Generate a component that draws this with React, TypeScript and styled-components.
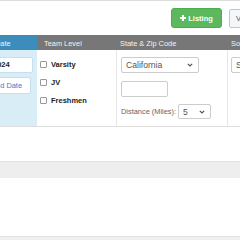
import React from 'react'
import styled, { createGlobalStyle } from 'styled-components'

const GlobalStyle = createGlobalStyle`
  body {
    margin: 0;
    background: #fff;
    font-family: 'Liberation Sans', Arial, sans-serif;
  }
`

export default function App() {
  return (
    <>
      <GlobalStyle />
      <Viewport>
        <Sheet>
          <Toolbar>
            <AddButton>
              <svg width="6" height="6" viewBox="0 0 6 6">
                <path d="M3 0v6M0 3h6" stroke="#fff" strokeWidth="2" />
              </svg>
              Listing
            </AddButton>
            <GhostButton>View</GhostButton>
          </Toolbar>

          <HeaderRow>
            <HeadCell $active $pad={7}>Date</HeadCell>
            <HeadCell $pad={7}>Team Level</HeadCell>
            <HeadCell $pad={3}>State &amp; Zip Code</HeadCell>
            <HeadCell $pad={3}>Sort By</HeadCell>
          </HeaderRow>

          <BodyRow>
            <DateCell>
              <DateInput>2024</DateInput>
              <LinkButton>Add Date</LinkButton>
            </DateCell>
            <TeamCell>
              {['Varsity', 'JV', 'Freshmen'].map((t) => (
                <CheckRow key={t}>
                  <Check />
                  {t}
                </CheckRow>
              ))}
            </TeamCell>
            <StateCell>
              <Select $w={78}>
                California
                <Chevron />
              </Select>
              <TextBox />
              <DistanceRow>
                Distance (Miles):
                <Select $w={33} $h={15}>
                  5
                  <Chevron />
                </Select>
              </DistanceRow>
            </StateCell>
            <SortCell>
              <Select $w={70}>
                Sort
                <Chevron />
              </Select>
            </SortCell>
          </BodyRow>

          <Gap />
          <Band />
          <Blank />
          <Footer />
        </Sheet>
      </Viewport>
    </>
  )
}

function Chevron() {
  return (
    <svg width="6" height="4" viewBox="0 0 6 4">
      <path d="M0.8 0.8L3 3L5.2 0.8" fill="none" stroke="#555" strokeWidth="1.2" />
    </svg>
  )
}

const Viewport = styled.div`
  width: 240px;
  height: 240px;
  overflow: hidden;
`

const Sheet = styled.div`
  width: 320px;
  margin-left: -12px;
  border-top: 1px solid #ddd;
`

const Toolbar = styled.div`
  height: 34px;
  display: flex;
  justify-content: flex-end;
  align-items: flex-start;
  gap: 7px;
  padding: 7px 49px 0 0;
  box-sizing: border-box;
`

const AddButton = styled.div`
  height: 20px;
  box-sizing: border-box;
  display: flex;
  align-items: center;
  gap: 2px;
  padding: 0 8px;
  background: #5cb85c;
  border: 1px solid #4cae4c;
  border-radius: 3px;
  color: #fff;
  font-weight: bold;
  font-size: 7.5px;
`

const GhostButton = styled.div`
  height: 19px;
  margin-top: 1px;
  box-sizing: border-box;
  display: flex;
  align-items: center;
  padding: 0 6px;
  background: #f4f7fa;
  border: 1px solid #b8c7d6;
  border-radius: 2px;
  color: #555;
  font-size: 7.5px;
`

const HeaderRow = styled.div`
  display: grid;
  grid-template-columns: 49px 80px 111px 80px;
  height: 15px;
  background: #777;
`

const HeadCell = styled.div<{ $active?: boolean; $pad: number }>`
  background: ${(p) => (p.$active ? '#3c8dbc' : 'transparent')};
  color: #f4f4f4;
  font-size: 7.4px;
  line-height: 15px;
  padding: 1px 0 0 ${(p) => p.$pad}px;
  white-space: nowrap;
  overflow: hidden;
`

const BodyRow = styled.div`
  display: grid;
  grid-template-columns: 49px 80px 111px 80px;
  height: 77px;
  border-bottom: 1px solid #ddd;
  box-sizing: border-box;
`

const DateCell = styled.div`
  background: #d9edf7;
  display: flex;
  flex-direction: column;
  align-items: flex-end;
  gap: 4px;
  padding: 7px 4px 0 0;
`

const DateInput = styled.div`
  width: 44px;
  height: 16px;
  box-sizing: border-box;
  background: #fff;
  border: 1px solid #c6dfee;
  border-radius: 2px;
  padding-left: 3px;
  font-size: 7.5px;
  font-weight: bold;
  line-height: 14px;
  color: #222;
`

const LinkButton = styled.div`
  height: 17px;
  box-sizing: border-box;
  margin-right: 2px;
  padding: 0 8px;
  background: #fff;
  border: 1px solid #c6dfee;
  border-radius: 2px;
  color: #3a7bc8;
  font-size: 7.4px;
  line-height: 15px;
  white-space: nowrap;
`

const TeamCell = styled.div`
  border-right: 1px solid #e6e6e6;
  padding: 5px 0 0 3px;
`

const CheckRow = styled.div`
  height: 18px;
  display: flex;
  align-items: center;
  gap: 4px;
  font-size: 7.5px;
  font-weight: bold;
  color: #222;
`

const Check = styled.span`
  width: 7px;
  height: 7px;
  box-sizing: border-box;
  border: 1px solid #999;
  border-radius: 1px;
  background: #fff;
`

const StateCell = styled.div`
  border-right: 1px solid #e6e6e6;
  padding: 7px 0 0 4px;
  display: flex;
  flex-direction: column;
  align-items: flex-start;
  gap: 8px;
`

const Select = styled.div<{ $w: number; $h?: number }>`
  width: ${(p) => p.$w}px;
  height: ${(p) => p.$h ?? 16}px;
  box-sizing: border-box;
  display: flex;
  align-items: center;
  justify-content: space-between;
  padding: 0 5px 0 4px;
  background: #fff;
  border: 1px solid #ccc;
  border-radius: 2px;
  color: #555;
  font-size: 8.6px;
`

const TextBox = styled.div`
  width: 47px;
  height: 16px;
  box-sizing: border-box;
  border: 1px solid #ccc;
  border-radius: 2px;
`

const DistanceRow = styled.div`
  display: flex;
  align-items: center;
  gap: 2px;
  margin-top: -1px;
  color: #666;
  font-size: 7.4px;
`

const SortCell = styled.div`
  padding: 7px 0 0 3px;
`

const Gap = styled.div`
  height: 34px;
`

const Band = styled.div`
  height: 16px;
  background: #eee;
  border-top: 1px solid #e2e2e2;
`

const Blank = styled.div`
  height: 58px;
`

const Footer = styled.div`
  height: 4px;
  background: #f0f0f0;
  border-top: 1px solid #e0e0e0;
`
